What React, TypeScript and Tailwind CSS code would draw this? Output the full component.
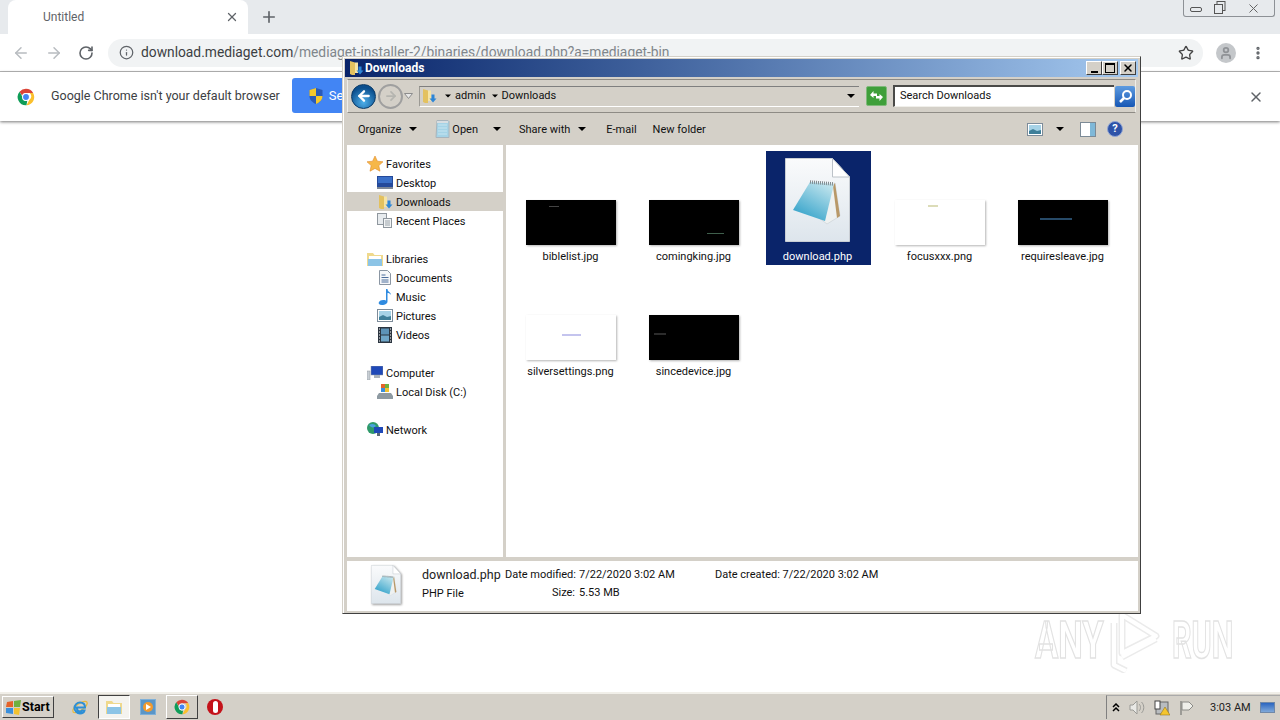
import { ReactNode } from "react";
import { X, Plus, ArrowLeft, ArrowRight, RotateCw, Info, Star, MoreVertical, User } from "lucide-react";

function ChromeLogo({ size = 18 }: { size?: number }) {
  return (
    <svg width={size} height={size} viewBox="0 0 24 24">
      <path d="M12 1a11 11 0 0 1 9.500 5.500H12a5.500 5.500 0 0 0-5.200 3.700L3.400 5A11 11 0 0 1 12 1z" fill="#db4437" />
      <path d="M21.500 6.500A11 11 0 0 1 12.600 23l4.200-7.600a5.500 5.500 0 0 0 0-8.900z" fill="#fbc02d" />
      <path d="M3.400 5l4.300 7.600a5.500 5.500 0 0 0 5.900 4.800L12.600 23A11 11 0 0 1 3.400 5z" fill="#0f9d58" />
      <circle cx="12" cy="12" r="4.600" fill="#4285f4" stroke="#fff" strokeWidth="1.400" />
    </svg>
  );
}

function Shield() {
  return (
    <svg width="14" height="16" viewBox="0 0 14 16" className="shrink-0">
      <path d="M7 0l6.500 2v6c0 4-3 6.500-6.500 8C3.500 14.500.5 12 .5 8V2z" fill="#2a5bb8" />
      <path d="M7 0v8H.5V2zM7 8h6.500c0 4-3 6.500-6.500 8z" fill="#f4c92e" />
    </svg>
  );
}

function FolderDown({ size = 16 }: { size?: number }) {
  return (
    <svg width={size} height={size} viewBox="0 0 16 16">
      <path d="M2 1l5 1.500V15H4l-2-1z" fill="#e3c15f" />
      <path d="M7 2.500h3V13H7z" fill="#f5e4a6" />
      <path d="M10.500 6.500h3v4h2l-3.500 4-3.500-4h2z" fill="#2e86d6" />
    </svg>
  );
}

function DocIcon({ w, h }: { w: number; h: number }) {
  return (
    <svg width={w} height={h} viewBox="0 0 65 84">
      <defs>
        <linearGradient id="docpage" x1="0" y1="0" x2="0" y2="1">
          <stop offset="0" stopColor="#fafbfc" />
          <stop offset="1" stopColor="#dde5ec" />
        </linearGradient>
        <linearGradient id="docpad" x1="0.8" y1="0" x2="0.2" y2="1">
          <stop offset="0" stopColor="#c5e6ee" />
          <stop offset="1" stopColor="#2c9fc8" />
        </linearGradient>
      </defs>
      <path d="M.5.500h47L64.500 19v64.500H.500z" fill="url(#docpage)" stroke="#c9ced4" />
      <path d="M47.500.500V19h17z" fill="#fff" stroke="#bcc2c8" />
      <path d="M50 25l5 33-13 8-8-6z" fill="#eef1f1" stroke="#c8cfd4" strokeWidth=".6" />
      <path d="M50 25l5 33-3 2-4-32z" fill="#b89868" />
      <path d="M25 24l24 2-9 37L8 52z" fill="url(#docpad)" />
      <path d="M25 24l24 2" stroke="#7f8a8e" strokeWidth="3.500" strokeDasharray="1 1" />
    </svg>
  );
}

function NotepadSmall() {
  return (
    <svg width="15" height="18" viewBox="0 0 15 18">
      <path d="M2 .5h11l1 1v16H1z" fill="#a5d3e6" stroke="#a8b4bc" />
      <path d="M2 1h11v2H2z" fill="#d8dee2" />
      <path d="M3 5h9M3 8h9M3 11h9M3 14h9" stroke="#c7e5f0" />
    </svg>
  );
}

function Caret({ className = "" }: { className?: string }) {
  return <span className={`inline-block w-0 h-0 border-x-[4px] border-x-transparent border-t-[4px] border-t-black ${className}`} />;
}

function NavIcon({ kind }: { kind: string }) {
  if (kind === "star")
    return (
      <svg width="16" height="16" viewBox="0 0 16 16">
        <path d="M8 0l2.400 5.200 5.600.6-4.200 3.800 1.200 5.600L8 12.400l-5 2.800 1.200-5.600L0 5.800l5.600-.6z" fill="#f6b748" stroke="#e08b2a" strokeWidth=".6" />
      </svg>
    );
  if (kind === "desktop")
    return (
      <svg width="16" height="14" viewBox="0 0 16 14">
        <rect width="16" height="11" fill="#24499a" />
        <rect x="1" y="1" width="14" height="6" fill="#3a6fc8" />
        <rect y="11" width="16" height="2" fill="#7d8796" />
      </svg>
    );
  if (kind === "folder") return <FolderDown size={16} />;
  if (kind === "recent")
    return (
      <svg width="16" height="16" viewBox="0 0 16 16">
        <rect x=".5" y=".5" width="9" height="11" fill="#e7ebee" stroke="#8f979e" />
        <rect x="6.500" y="5.500" width="8" height="9" fill="#f2f4f5" stroke="#8f979e" />
        <path d="M8 8h5M8 10h5M8 12h5" stroke="#9aa3aa" />
      </svg>
    );
  if (kind === "libraries")
    return (
      <svg width="16" height="14" viewBox="0 0 16 14">
        <path d="M0 1h6l1.500 2H16v11H0z" fill="#efd98d" />
        <path d="M2 4h12v3H2z" fill="#fff" />
        <path d="M1 7h14v7H1z" fill="#8cc4e6" />
      </svg>
    );
  if (kind === "documents")
    return (
      <svg width="12" height="15" viewBox="0 0 12 15">
        <path d="M.5.500h8l3 3v11H.5z" fill="#f6f7f9" stroke="#8b96a3" />
        <path d="M2.500 5h4M2.500 7.500h7M2.500 10h7M2.500 12h7" stroke="#4d6e9c" />
      </svg>
    );
  if (kind === "music")
    return (
      <svg width="14" height="16" viewBox="0 0 14 16">
        <path d="M8 0h1.500c0 3 3.500 3 3.500 6-1-1.500-2-2-3.500-2v8.500C9.500 14.500 7 16 4 16s-4-1.500-3-3 3-2.500 7-1.500z" fill="#2f8be0" />
      </svg>
    );
  if (kind === "pictures")
    return (
      <svg width="16" height="13" viewBox="0 0 16 13">
        <rect x=".5" y=".5" width="15" height="12" fill="#fff" stroke="#7d8c9a" />
        <rect x="2" y="2" width="12" height="9" fill="#a6d2e6" />
        <path d="M2 8l4-2 4 2 4-1v4H2z" fill="#3f7f99" />
      </svg>
    );
  if (kind === "videos")
    return (
      <svg width="14" height="16" viewBox="0 0 14 16">
        <rect width="14" height="16" fill="#2b3540" />
        <rect x="3" y="1.500" width="8" height="6" fill="#5d93b8" />
        <rect x="3" y="8.500" width="8" height="6" fill="#6fa6c8" />
        <path d="M1 2h1M1 5h1M1 8h1M1 11h1M1 14h1M12 2h1M12 5h1M12 8h1M12 11h1M12 14h1" stroke="#fff" />
      </svg>
    );
  if (kind === "computer")
    return (
      <svg width="16" height="14" viewBox="0 0 16 14">
        <rect x="0" y="5" width="3" height="9" fill="#c8ced4" stroke="#8f979e" strokeWidth=".5" />
        <rect x="4" y="0" width="12" height="9" fill="#1f49b8" stroke="#8f979e" strokeWidth=".5" />
        <rect x="7" y="9" width="6" height="3" fill="#aab2ba" />
      </svg>
    );
  if (kind === "disk")
    return (
      <svg width="16" height="15" viewBox="0 0 16 15">
        <rect x="4" y="0" width="4" height="4" fill="#e5632a" />
        <rect x="8" y="0" width="4" height="4" fill="#6fb13e" />
        <rect x="4" y="4" width="4" height="4" fill="#3a8fdc" />
        <rect x="8" y="4" width="4" height="4" fill="#f2c230" />
        <path d="M2 9h12l2 3v3H0v-3z" fill="#8e9aa2" />
      </svg>
    );
  return (
    <svg width="16" height="15" viewBox="0 0 16 15">
      <circle cx="6" cy="6" r="6" fill="#2f9a6a" />
      <path d="M2 3c3-2 6-1 7 1-2 2-5 2-7-1z" fill="#4aa3df" />
      <rect x="7" y="5" width="9" height="6" fill="#1f49b8" />
      <rect x="10" y="11" width="3" height="3" fill="#5d6a77" />
    </svg>
  );
}

const groups = [
  [
    { label: "Favorites", icon: "star" },
    { label: "Desktop", icon: "desktop", sub: true },
    { label: "Downloads", icon: "folder", sub: true, active: true },
    { label: "Recent Places", icon: "recent", sub: true },
  ],
  [
    { label: "Libraries", icon: "libraries" },
    { label: "Documents", icon: "documents", sub: true },
    { label: "Music", icon: "music", sub: true },
    { label: "Pictures", icon: "pictures", sub: true },
    { label: "Videos", icon: "videos", sub: true },
  ],
  [
    { label: "Computer", icon: "computer" },
    { label: "Local Disk (C:)", icon: "disk", sub: true },
  ],
  [{ label: "Network", icon: "network" }],
];

function Sidebar() {
  return (
    <div className="w-[156px] pt-[9px] flex flex-col gap-[19px] bg-white shrink-0">
      {groups.map((g, i) => (
        <div key={i}>
          {g.map((row) => (
            <div
              key={row.label}
              className={`h-[19px] flex items-center ${row.sub ? "pl-[29px]" : "pl-[19px]"} ${row.active ? "bg-[#d4d0c8]" : ""}`}
            >
              <span className="w-[20px] shrink-0 flex justify-center -ml-[1px]">
                <NavIcon kind={row.icon} />
              </span>
              <span className="ml-[1px] mt-[3px]">{row.label}</span>
            </div>
          ))}
        </div>
      ))}
    </div>
  );
}

function Thumb({ tone, mark }: { tone: "black" | "white"; mark: string }) {
  return (
    <div className={`relative mr-[2px] w-[90px] h-[45px] shadow-[1px_1px_2px_#b5b5b5] ${tone === "black" ? "bg-black" : "bg-white"}`}>
      <span className={`absolute blur-[0.4px] ${mark}`} />
    </div>
  );
}

const files = [
  { name: "biblelist.jpg", tone: "black", mark: "left-[23px] top-[6px] w-[10px] h-[1px] bg-[#444]" },
  { name: "comingking.jpg", tone: "black", mark: "left-[58px] top-[33px] w-[17px] h-[1px] bg-[#3f5f4c]" },
  { name: "download.php", selected: true },
  { name: "focusxxx.png", tone: "white", mark: "left-[33px] top-[5px] w-[10px] h-[2px] bg-[#dcdcb8]" },
  { name: "requiresleave.jpg", tone: "black", mark: "left-[22px] top-[18px] w-[32px] h-[2px] bg-[#274a68]" },
  { name: "silversettings.png", tone: "white", mark: "left-[36px] top-[19px] w-[19px] h-[2px] bg-[#c4c4ee]" },
  { name: "sincedevice.jpg", tone: "black", mark: "left-[5px] top-[18px] w-[12px] h-[2px] bg-[#2c2c2c]" },
] as const;

function FileGrid() {
  return (
    <div className="flex-1 bg-white pl-[4px] pt-[6px] grid grid-cols-[repeat(5,123px)] auto-rows-[114px] gap-y-[1px] content-start">
      {files.map((f) => (
        <div key={f.name} className="flex justify-center">
          {"selected" in f ? (
            <div className="ml-[2px] w-[105px] h-[114px] pr-[2px] flex flex-col items-center justify-end bg-[#0a246a] text-white">
              <span className="mb-[3px] flex">
                <DocIcon w={65} h={84} />
              </span>
              <span className="h-[17px] leading-[17px] mt-[3px] whitespace-nowrap">{f.name}</span>
            </div>
          ) : (
            <div className="w-[105px] h-[114px] flex flex-col items-center justify-end">
              <Thumb tone={f.tone} mark={f.mark} />
              <span className="mr-[2px] h-[17px] leading-[17px] mt-[3px] whitespace-nowrap">{f.name}</span>
            </div>
          )}
        </div>
      ))}
    </div>
  );
}

function BackButtons() {
  return (
    <div className="flex items-center ml-[3px]">
      <div className="w-[25px] h-[25px] rounded-full bg-[radial-gradient(circle_at_50%_75%,#4fb0ea,#0b4f8e_70%)] border border-[#0b3a66] flex items-center justify-center">
        <ArrowLeft size={16} strokeWidth={3.5} className="text-white" />
      </div>
      <div className="w-[25px] h-[25px] ml-[2px] rounded-full bg-[#d4d0c8] border-2 border-[#9f9f9f] flex items-center justify-center">
        <ArrowRight size={14} strokeWidth={3} className="text-[#b5b5b0]" />
      </div>
      <svg width="9" height="6" viewBox="0 0 9 6" className="ml-[1px]">
        <path d="M.5.500h8L4.500 5.500z" fill="#e8e8e8" stroke="#8c8c8c" />
      </svg>
    </div>
  );
}

function AddressRow() {
  return (
    <div className="mx-[2px] h-[34px] border border-y-[#8e8b85] border-x-[#efeee9] flex items-center bg-[#d4d0c8]">
      <BackButtons />
      <div className="ml-[6px] w-[440px] h-[21px] border-t border-t-[#7f7f7f] border-l border-l-[#9c9a94] border-b border-b-white flex items-center bg-[#d4d0c8]">
        <span className="ml-[1px]">
          <FolderDown size={16} />
        </span>
        <Caret className="ml-[7px] scale-75" />
        <span className="ml-[3px]">admin</span>
        <Caret className="ml-[5px] scale-75" />
        <span className="ml-[3px]">Downloads</span>
        <Caret className="ml-auto mr-[4px]" />
      </div>
      <div className="ml-[7px] w-[21px] h-[20px] rounded-[2px] bg-[#3f9f3a] border border-[#7fb97a] flex items-center justify-center">
        <svg width="15" height="14" viewBox="0 0 15 14">
          <path d="M1 6l3.500-4v2.500H8V7H4.500v2zM14 8l-3.500 4V9.500H7V7h3.500V5z" fill="#fff" />
        </svg>
      </div>
      <div className="ml-[6px] w-[221px] h-[22px] bg-white border-t-2 border-l-2 border-t-[#4a4a48] border-l-[#4a4a48] border-b border-b-[#f0efea] pl-[5px] flex items-center">
        Search Downloads
      </div>
      <div className="ml-[1px] w-[20px] h-[21px] rounded-[2px] bg-gradient-to-b from-[#5d9be0] to-[#1557b5] flex items-center justify-center">
        <svg width="15" height="15" viewBox="0 0 15 15">
          <circle cx="9" cy="6" r="4" fill="none" stroke="#fff" strokeWidth="2" />
          <path d="M6 9l-4 4" stroke="#fff" strokeWidth="2.500" />
        </svg>
      </div>
    </div>
  );
}

function Toolbar() {
  return (
    <div className="h-[32px] flex items-center bg-[#d4d0c8] pl-[13px] pr-[15px]">
      <span className="mt-[2px]">Organize</span>
      <Caret className="ml-[8px]" />
      <span className="ml-[18px]">
        <NotepadSmall />
      </span>
      <span className="ml-[2px] mt-[2px]">Open</span>
      <Caret className="ml-[15px]" />
      <span className="ml-[18px] mt-[2px]">Share with</span>
      <Caret className="ml-[8px]" />
      <span className="ml-[20px] mt-[2px]">E-mail</span>
      <span className="ml-[16px] mt-[2px]">New folder</span>
      <span className="ml-auto">
        <NavIcon kind="pictures" />
      </span>
      <Caret className="ml-[13px]" />
      <svg width="16" height="15" viewBox="0 0 16 15" className="ml-[16px]">
        <rect x=".5" y=".5" width="15" height="14" fill="#fff" stroke="#7c8a96" />
        <rect x="10" y="1" width="5" height="13" fill="#7fb8d8" />
      </svg>
      <span className="ml-[11px] w-[16px] h-[16px] rounded-full bg-[#2e53a8] border border-[#8fa4d4] text-white font-bold text-[11px] leading-[14px] text-center">?</span>
    </div>
  );
}

function StatusBar() {
  return (
    <div className="h-[50px] bg-white flex items-start pl-[24px]">
      <span className="mt-[4px] flex drop-shadow-[1px_1px_1px_#999]">
        <DocIcon w={30} h={39} />
      </span>
      <div className="ml-[21px] w-[83px] flex flex-col">
        <span className="h-[19px] mt-[4px] text-[12.5px] leading-[19px] text-[#222] whitespace-nowrap">download.php</span>
        <span className="h-[18px] mt-[1px] leading-[18px]">PHP File</span>
      </div>
      <div className="grid grid-cols-[70px_130px] mt-[5px] auto-rows-[18px] leading-[18px] gap-x-[4px]">
        <span className="text-right whitespace-nowrap">Date modified:</span>
        <span>7/22/2020 3:02 AM</span>
        <span className="text-right">Size:</span>
        <span>5.53 MB</span>
      </div>
      <div className="ml-[6px] mt-[5px] h-[18px] leading-[18px]">Date created: 7/22/2020 3:02 AM</div>
    </div>
  );
}

function WinBtn({ children }: { children: ReactNode }) {
  return (
    <span className="w-[16px] h-[14px] bg-[#d4d0c8] flex items-center justify-center border border-white border-r-[#404040] border-b-[#404040]">
      {children}
    </span>
  );
}

function ExplorerWindow() {
  return (
    <div className="absolute left-[342px] top-[56px] w-[799px] h-[558px] bg-[#d4d0c8] border border-[#404040] border-t-[#d4d0c8] border-l-[#d4d0c8] shadow-[inset_1px_1px_0_#fff] p-[2px] text-[11px] text-[#111] flex flex-col">
      <div className="h-[18px] shrink-0 bg-gradient-to-r from-[#0a246a] to-[#a6caf0] flex items-center pl-[3px] pr-[2px]">
        <FolderDown size={16} />
        <span className="ml-[1px] text-white font-bold text-[12px]">Downloads</span>
        <div className="ml-auto flex">
          <WinBtn>
            <span className="mt-[8px] w-[7px] h-[2px] bg-black" />
          </WinBtn>
          <WinBtn>
            <span className="w-[10px] h-[10px] border border-black border-t-2" />
          </WinBtn>
          <span className="ml-[2px]">
            <WinBtn>
              <X size={12} strokeWidth={3} className="text-black" />
            </WinBtn>
          </span>
        </div>
      </div>
      <div className="mt-[2px] shrink-0">
        <AddressRow />
      </div>
      <Toolbar />
      <div className="flex flex-1 min-h-0 ml-[2px]">
        <Sidebar />
        <div className="w-[3px] bg-[#d4d0c8] shrink-0" />
        <FileGrid />
      </div>
      <div className="h-[4px] shrink-0 bg-[#d4d0c8]" />
      <div className="ml-[2px] shrink-0">
        <StatusBar />
      </div>
    </div>
  );
}

function ChromeWindow() {
  return (
    <div className="flex-1 flex flex-col bg-white text-[#3c4043]">
      <div className="h-[34px] bg-[#e7eaed] flex items-end relative">
        <div className="ml-[8px] w-[240px] h-[34px] bg-white rounded-t-[8px] flex items-center pl-[35px]">
          <span className="text-[12px] text-[#5f6368]">Untitled</span>
          <X size={14} strokeWidth={2.2} className="ml-auto mr-[9px] text-[#5f6368]" />
        </div>
        <Plus size={18} strokeWidth={2.2} className="ml-[12px] mb-[8px] text-[#5f6368]" />
        <div className="absolute right-[5px] top-0 w-[92px] h-[17px] border border-t-0 border-[#8d9196] rounded-b-[3px] flex items-center text-[#666]">
          <span className="ml-[6px] w-[12px] h-[5px] mt-[3px] border border-[#555] rounded-[2px]" />
          <svg width="14" height="14" viewBox="0 0 14 14" className="ml-[11px]">
            <rect x="4" y=".5" width="8" height="9" fill="none" stroke="#555" />
            <rect x="1.500" y="3.500" width="8" height="9" fill="#e7eaed" stroke="#555" />
          </svg>
          <X size={15} strokeWidth={1.6} className="ml-[19px] text-[#666]" />
        </div>
      </div>
      <div className="h-[38px] border-b border-b-[#b5b5b5] flex items-center bg-white">
        <ArrowLeft size={18} strokeWidth={2} className="ml-[12px] text-[#b8bcc0]" />
        <ArrowRight size={18} strokeWidth={2} className="ml-[15px] text-[#b8bcc0]" />
        <RotateCw size={16} strokeWidth={2.4} className="ml-[15px] text-[#5f6368]" />
        <div className="ml-[14px] w-[1095px] h-[28px] rounded-full bg-[#f1f3f4] flex items-center pl-[11px] pr-[9px]">
          <Info size={15} className="text-[#5f6368]" />
          <span className="ml-[7px] text-[13.8px] whitespace-nowrap">
            download.mediaget.com<span className="text-[#80868b]">/mediaget-installer-2/binaries/download.php?a=mediaget-bin</span>
          </span>
          <Star size={16} strokeWidth={2} className="ml-auto text-[#444]" />
        </div>
        <span className="ml-[13px] w-[20px] h-[20px] rounded-full bg-[#c4c7ca] flex items-center justify-center">
          <User size={14} strokeWidth={3} className="text-[#8f9296]" />
        </span>
        <MoreVertical size={16} strokeWidth={3} className="ml-[14px] text-[#5f6368]" />
      </div>
      <div className="h-[49px] flex items-center shadow-[0_1px_3px_#777] bg-white relative">
        <span className="ml-[17px] flex">
          <ChromeLogo />
        </span>
        <span className="ml-[16px] text-[12.5px] whitespace-nowrap">Google Chrome isn't your default browser</span>
        <div className="ml-[12px] mb-[2px] w-[150px] h-[35px] rounded-[3px] bg-[#4285f4] flex items-center pl-[17px] text-white text-[13px] whitespace-nowrap">
          <Shield />
          <span className="ml-[6px]">Set as default</span>
        </div>
        <X size={16} strokeWidth={2.2} className="ml-auto mr-[16px] text-[#5f6368]" />
      </div>
      <div className="flex-1 bg-white" />
    </div>
  );
}

function Taskbar() {
  return (
    <div className="h-[28px] shrink-0 bg-[#d4d0c8] border-t-2 border-t-[#f1efe9] flex items-center text-[11px] text-[#222]">
      <div className="ml-[2px] w-[52px] h-[22px] flex items-center pl-[3px] bg-[#d4d0c8] border border-white border-r-[#404040] border-b-[#404040] font-bold text-[12.5px] text-black">
        <svg width="16" height="15" viewBox="0 0 16 15">
          <path d="M1 2l6-1v6H0z" fill="#e5632a" />
          <path d="M8 1l7-1-1 7H8z" fill="#6fb13e" />
          <path d="M0 8h7v6l-7-1z" fill="#3a8fdc" />
          <path d="M8 8h6l-1 7-5-1z" fill="#f2c230" />
        </svg>
        <span>Start</span>
      </div>
      <svg width="18" height="18" viewBox="0 0 18 18" className="ml-[17px]">
        <ellipse cx="9" cy="9" rx="8.500" ry="3.500" transform="rotate(-35 9 9)" fill="none" stroke="#e8b93c" strokeWidth="1.300" />
        <path d="M4 9.500h10c0-3-2-5-5-5s-5.500 2.500-5.500 5.500 2.500 5.500 5.500 5.500c2.500 0 4-1 4.500-3H11c-.5 1-1 1-2 1-1.500 0-3-1-3-3h0" fill="none" stroke="#2d8fd6" strokeWidth="2" />
      </svg>
      <div className="ml-[9px] w-[32px] h-[24px] bg-[#f4f3ef] border border-[#404040] border-r-white border-b-white flex items-center justify-center">
        <NavIcon kind="libraries" />
      </div>
      <span className="ml-[10px] w-[16px] h-[16px] bg-[#5a96c8] border border-[#7fb0d8] flex items-center justify-center">
        <span className="w-[10px] h-[10px] rounded-full bg-[#f29a2e] flex items-center justify-center">
          <span className="w-0 h-0 border-y-[3px] border-y-transparent border-l-[5px] border-l-white ml-[1px]" />
        </span>
      </span>
      <div className="ml-[10px] w-[32px] h-[24px] bg-[#d4d0c8] border border-white border-r-[#404040] border-b-[#404040] flex items-center justify-center">
        <ChromeLogo size={16} />
      </div>
      <span className="ml-[9px] w-[16px] h-[16px] rounded-full bg-[#c4121a] flex items-center justify-center">
        <span className="w-[5px] h-[12px] rounded-full bg-white" />
      </span>
      <div className="ml-auto w-[174px] h-[24px] flex items-center border-l border-l-[#808080] border-t border-t-[#aaa] pl-[5px]">
        <svg width="8" height="9" viewBox="0 0 8 9">
          <path d="M1 4l3-3 3 3M1 8l3-3 3 3" fill="none" stroke="#000" strokeWidth="1.500" />
        </svg>
        <svg width="16" height="15" viewBox="0 0 16 15" className="ml-[9px]">
          <path d="M1 5h3l4-4v13l-4-4H1z" fill="#e9e9e6" stroke="#9a9a96" />
          <path d="M10 4c2 2 2 5 0 7M12.500 2c3 3 3 8 0 11" fill="none" stroke="#9a9a96" />
        </svg>
        <svg width="16" height="16" viewBox="0 0 16 16" className="ml-[9px]">
          <rect x="2" y="2" width="12" height="12" fill="#b8bcc0" stroke="#666" />
          <rect x="1" y="1" width="5" height="8" fill="#fff" stroke="#444" />
          <path d="M11 7l5 8H6z" fill="#f4c52e" stroke="#8a6a10" strokeWidth=".5" />
        </svg>
        <svg width="15" height="15" viewBox="0 0 15 15" className="ml-[9px]">
          <path d="M2 1v14" stroke="#8a8a86" strokeWidth="1.500" />
          <path d="M3 2h7l4 4-4 4H3z" fill="#efefea" stroke="#8a8a86" />
        </svg>
        <span className="ml-[16px] mt-[2px] whitespace-nowrap">3:03 AM</span>
        <span className="ml-auto mr-[5px] w-[15px] h-[11px] bg-gradient-to-b from-[#2a65c0] to-[#7fa8d8] border border-[#6f88a8]" />
      </div>
    </div>
  );
}

function Watermark() {
  return (
    <div className="absolute left-[1035px] top-[608px] w-[198px] h-[66px] flex items-center text-white font-['Roboto',sans-serif] text-[51px] font-bold [-webkit-text-stroke:1.5px_#e2e2e2] pointer-events-none">
      <span className="w-[73px] inline-block origin-left scale-x-[0.68] whitespace-nowrap">ANY</span>
      <svg width="55" height="64" viewBox="0 0 55 64" className="shrink-0">
        <path d="M6 14v42l12 6M14 6v38l34-17L14 6zM14 48l34-18" fill="none" stroke="#ebebeb" strokeWidth="7" strokeLinejoin="round" />
        <path d="M6 14v42l12 6M14 6v38l34-17L14 6zM14 48l34-18" fill="none" stroke="#fff" strokeWidth="4" strokeLinejoin="round" />
      </svg>
      <span className="ml-[9px] w-[60px] inline-block origin-left scale-x-[0.6] whitespace-nowrap">RUN</span>
    </div>
  );
}

export default function App() {
  return (
    <div className="relative w-[1280px] h-[720px] overflow-hidden flex flex-col font-['Roboto',sans-serif] bg-white">
      <ChromeWindow />
      <Taskbar />
      <Watermark />
      <ExplorerWindow />
    </div>
  );
}
